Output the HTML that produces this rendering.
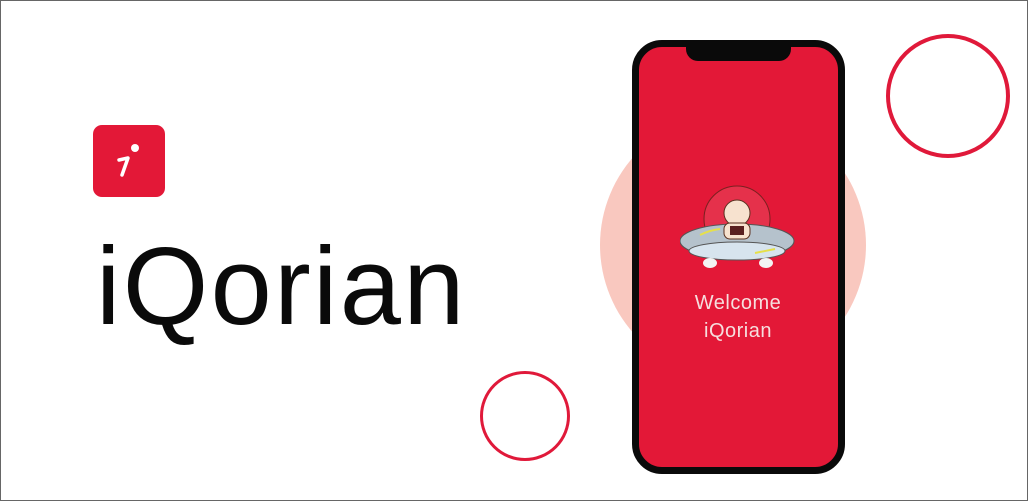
<!DOCTYPE html>
<html><head><style>
body{margin:0;width:1028px;height:501px;overflow:hidden;background:#fff;position:relative;font-family:"Liberation Sans",sans-serif}
.frame{position:absolute;left:0;top:0;width:1026px;height:499px;border:1px solid #666}
.abs{position:absolute}
</style></head><body>
<div class="frame"></div>
<div class="abs" style="left:93px;top:125px;width:72px;height:72px;background:#e31837;border-radius:9px"></div>
<svg class="abs" style="left:93px;top:125px" width="72" height="72">
<circle cx="42" cy="23" r="4" fill="#fff"/>
<path d="M26 35 L35 33 L29 50" stroke="#fff" stroke-width="3.5" fill="none" stroke-linecap="round" stroke-linejoin="round"/>
</svg>
<div class="abs" style="left:96px;top:227px;font-size:110px;letter-spacing:2.3px;color:#0a0a0a;line-height:120px">iQorian</div>
<div class="abs" style="left:600px;top:112px;width:266px;height:266px;border-radius:50%;background:#f9c8bf"></div>
<div class="abs" style="left:886px;top:34px;width:116px;height:116px;border-radius:50%;border:4px solid #e0193a"></div>
<div class="abs" style="left:480px;top:371px;width:84px;height:84px;border-radius:50%;border:3.5px solid #e0193a"></div>
<div class="abs" style="left:632px;top:40px;width:199px;height:420px;border:7px solid #0a0a0a;border-radius:30px;background:#e31837"></div>
<div class="abs" style="left:686px;top:44px;width:105px;height:17px;background:#0a0a0a;border-radius:0 0 12px 12px"></div>
<svg class="abs" style="left:680px;top:183px" width="115" height="100">
<circle cx="57" cy="36" r="33" fill="#f0c0c0" fill-opacity=".15" stroke="#7a2020" stroke-width="1"/>
<ellipse cx="57" cy="58" rx="57" ry="17" fill="#b5c2cc" stroke="#555" stroke-width="1"/>
<ellipse cx="57" cy="68" rx="48" ry="9" fill="#d7e4ee" stroke="#555" stroke-width="1"/>
<path d="M20 52 Q30 47 40 46 M75 70 L95 66" stroke="#e6e04a" stroke-width="2" fill="none"/>
<circle cx="57" cy="30" r="13" fill="#f7e2cf" stroke="#5a3020"/>
<rect x="44" y="40" width="26" height="16" rx="6" fill="#f7e2cf" stroke="#5a3020"/>
<rect x="50" y="43" width="14" height="9" fill="#5a2020"/>
<ellipse cx="30" cy="80" rx="7" ry="5" fill="#f3f3f3"/><ellipse cx="86" cy="80" rx="7" ry="5" fill="#f3f3f3"/>
</svg>
<div class="abs" style="left:638px;top:289px;width:200px;text-align:center;color:#f6dede;font-size:20px;line-height:28px;letter-spacing:.5px">Welcome<br>iQorian</div>
</body></html>
